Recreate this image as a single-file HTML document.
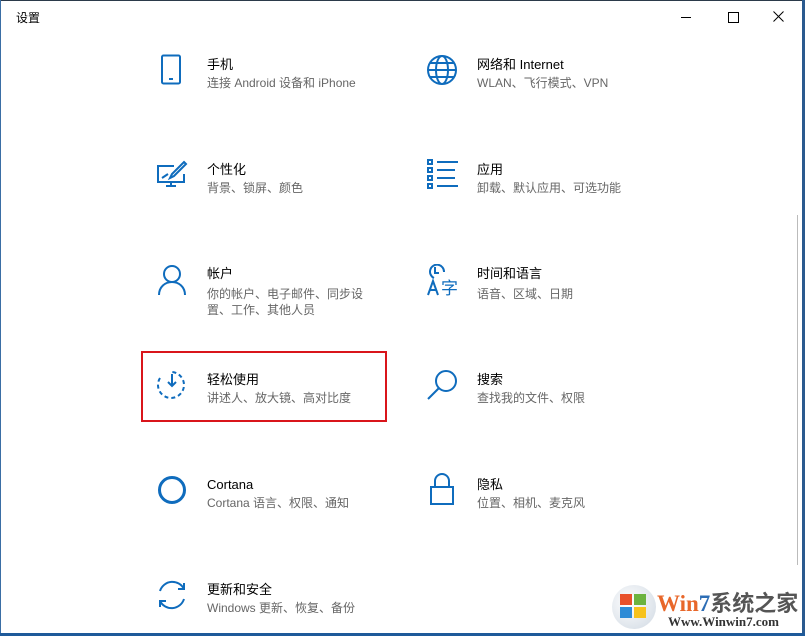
<!DOCTYPE html><html><head><meta charset="utf-8"><style>
body{margin:0;width:805px;height:636px;background:#fff;position:relative;overflow:hidden;font-family:"Liberation Sans","Noto Sans CJK SC",sans-serif}
.t{position:absolute;font-size:13px;color:#000;line-height:16px}
.s{position:absolute;font-size:12px;color:#666;line-height:16px}
svg.i{position:absolute}
</style></head><body>
<div style="position:absolute;left:0;top:0;width:805px;height:1px;background:#2b3a4a"></div>
<div style="position:absolute;left:0;top:0;width:1px;height:636px;background:#3a6ea5"></div>
<div style="position:absolute;right:0;top:0;width:3px;height:636px;background:#2a5a8f"></div>
<div style="position:absolute;left:0;top:633px;width:805px;height:3px;background:#1e5a9a"></div>
<div style="position:absolute;left:797px;top:215px;width:1px;height:350px;background:#bbb"></div>
<div class="t" style="left:16px;top:10px;font-size:12px">设置</div>
<div style="position:absolute;left:681px;top:17px;width:10px;height:1px;background:#000"></div>
<div style="position:absolute;left:728px;top:12px;width:9px;height:9px;border:1px solid #000"></div>
<svg style="position:absolute;left:773px;top:11px" width="11" height="11"><path d="M0.5 0.5L10.5 10.5M10.5 0.5L0.5 10.5" stroke="#000" stroke-width="1"/></svg>

<svg class="i" style="left:160px;top:54px" width="24" height="32" viewBox="0 0 24 32"><rect x="2" y="1.5" width="18" height="28" rx="1.5" fill="none" stroke="#0f6cbd" stroke-width="2"/><rect x="9" y="24" width="4" height="2" fill="#0f6cbd"/></svg>
<div class="t" style="left:207px;top:57px">手机</div><div class="s" style="left:207px;top:75px">连接 Android 设备和 iPhone</div>

<svg class="i" style="left:426px;top:54px" width="32" height="32" viewBox="0 0 32 32" fill="none" stroke="#0f6cbd" stroke-width="2"><circle cx="16" cy="16" r="14"/><ellipse cx="16" cy="16" rx="6" ry="14"/><path d="M2 16h28M4 9h24M4 23h24"/></svg>
<div class="t" style="left:477px;top:57px">网络和 Internet</div><div class="s" style="left:477px;top:75px">WLAN、飞行模式、VPN</div>

<svg class="i" style="left:156px;top:160px" width="32" height="30" viewBox="0 0 32 30" fill="none" stroke="#0f6cbd" stroke-width="2"><path d="M18 6H2v16h26v-8"/><path d="M10 26h10M15 22v4"/><path d="M28 2l2 2-12 12-4 2 2-4z"/><path d="M6 18l6-4"/></svg>
<div class="t" style="left:207px;top:162px">个性化</div><div class="s" style="left:207px;top:180px">背景、锁屏、颜色</div>

<svg class="i" style="left:427px;top:159px" width="32" height="30" viewBox="0 0 32 30" fill="none" stroke="#0f6cbd" stroke-width="2"><rect x="1" y="1" width="4" height="4"/><rect x="1" y="9" width="4" height="4"/><rect x="1" y="17" width="4" height="4"/><rect x="1" y="25" width="4" height="4"/><path d="M10 3h21M10 11h18M10 19h18M10 27h21"/></svg>
<div class="t" style="left:477px;top:162px">应用</div><div class="s" style="left:477px;top:180px">卸载、默认应用、可选功能</div>

<svg class="i" style="left:157px;top:264px" width="30" height="32" viewBox="0 0 30 32" fill="none" stroke="#0f6cbd" stroke-width="2"><circle cx="15" cy="10" r="8"/><path d="M2 31c0-8 6-13 13-13s13 5 13 13"/></svg>
<div class="t" style="left:207px;top:266px">帐户</div><div class="s" style="left:207px;top:286px;line-height:16px">你的帐户、电子邮件、同步设<br>置、工作、其他人员</div>

<svg class="i" style="left:426px;top:264px" width="34" height="32" viewBox="0 0 34 32" fill="none" stroke="#0f6cbd" stroke-width="2"><path d="M8 14a7 7 0 1 1 10-6"/><path d="M9 3v6h4"/><path d="M2 31l5-14 5 14M4 26h6" /><text x="15" y="30" font-size="17" fill="#0f6cbd" stroke="none" font-family="Noto Sans CJK SC">字</text></svg>
<div class="t" style="left:477px;top:266px">时间和语言</div><div class="s" style="left:477px;top:286px">语音、区域、日期</div>

<div style="position:absolute;left:141px;top:351px;width:242px;height:67px;border:2px solid #d9151b"></div>
<svg class="i" style="left:155px;top:370px" width="34" height="30" viewBox="0 0 34 30" fill="none" stroke="#0f6cbd" stroke-width="2"><path d="M5 8A13 13 0 1 0 17 2" stroke-dasharray="4 3"/><path d="M17 4v12M13 12l4 4 4-4"/></svg>
<div class="t" style="left:207px;top:372px">轻松使用</div><div class="s" style="left:207px;top:390px">讲述人、放大镜、高对比度</div>

<svg class="i" style="left:426px;top:369px" width="32" height="32" viewBox="0 0 32 32" fill="none" stroke="#0f6cbd" stroke-width="2"><circle cx="20" cy="12" r="10"/><path d="M13 19L2 30"/></svg>
<div class="t" style="left:477px;top:372px">搜索</div><div class="s" style="left:477px;top:390px">查找我的文件、权限</div>

<svg class="i" style="left:157px;top:474px" width="32" height="32" viewBox="0 0 32 32" fill="none" stroke="#0f6cbd" stroke-width="3"><circle cx="15" cy="16" r="12.5"/></svg>
<div class="t" style="left:207px;top:477px">Cortana</div><div class="s" style="left:207px;top:495px">Cortana 语言、权限、通知</div>

<svg class="i" style="left:429px;top:472px" width="26" height="34" viewBox="0 0 26 34" fill="none" stroke="#0f6cbd" stroke-width="2"><rect x="2" y="15" width="22" height="17"/><path d="M6 15V9a7 7 0 0 1 14 0v6"/></svg>
<div class="t" style="left:477px;top:477px">隐私</div><div class="s" style="left:477px;top:495px">位置、相机、麦克风</div>

<svg class="i" style="left:156px;top:579px" width="32" height="32" viewBox="0 0 32 32" fill="none" stroke="#0f6cbd" stroke-width="2"><path d="M4 12A13 13 0 0 1 28 10"/><path d="M28 20A13 13 0 0 1 4 22"/><path d="M22 10h6V4M10 22H4v6"/></svg>
<div class="t" style="left:207px;top:582px">更新和安全</div><div class="s" style="left:207px;top:600px">Windows 更新、恢复、备份</div>

<div style="position:absolute;left:612px;top:585px;width:44px;height:44px;border-radius:50%;background:radial-gradient(circle at 40% 40%,#fff,#cfd8e2)"></div>
<div style="position:absolute;left:620px;top:594px;width:12px;height:11px;background:#e8502a"></div><div style="position:absolute;left:634px;top:594px;width:12px;height:11px;background:#6cb33f"></div><div style="position:absolute;left:620px;top:607px;width:12px;height:11px;background:#2e8bd6"></div><div style="position:absolute;left:634px;top:607px;width:12px;height:11px;background:#f7c21c"></div>
<div style="position:absolute;left:657px;top:586px;font:bold 23px 'Liberation Serif','Noto Serif CJK SC',serif;color:#e8672a;white-space:nowrap">Win<span style="color:#2d6db5">7</span><span style="color:#555;font-family:'Noto Sans CJK SC';font-size:22px">系统之家</span></div>
<div style="position:absolute;left:668px;top:614px;font:bold 13px 'Liberation Serif',serif;color:#333">Www.Winwin7.com</div>
</body></html>
